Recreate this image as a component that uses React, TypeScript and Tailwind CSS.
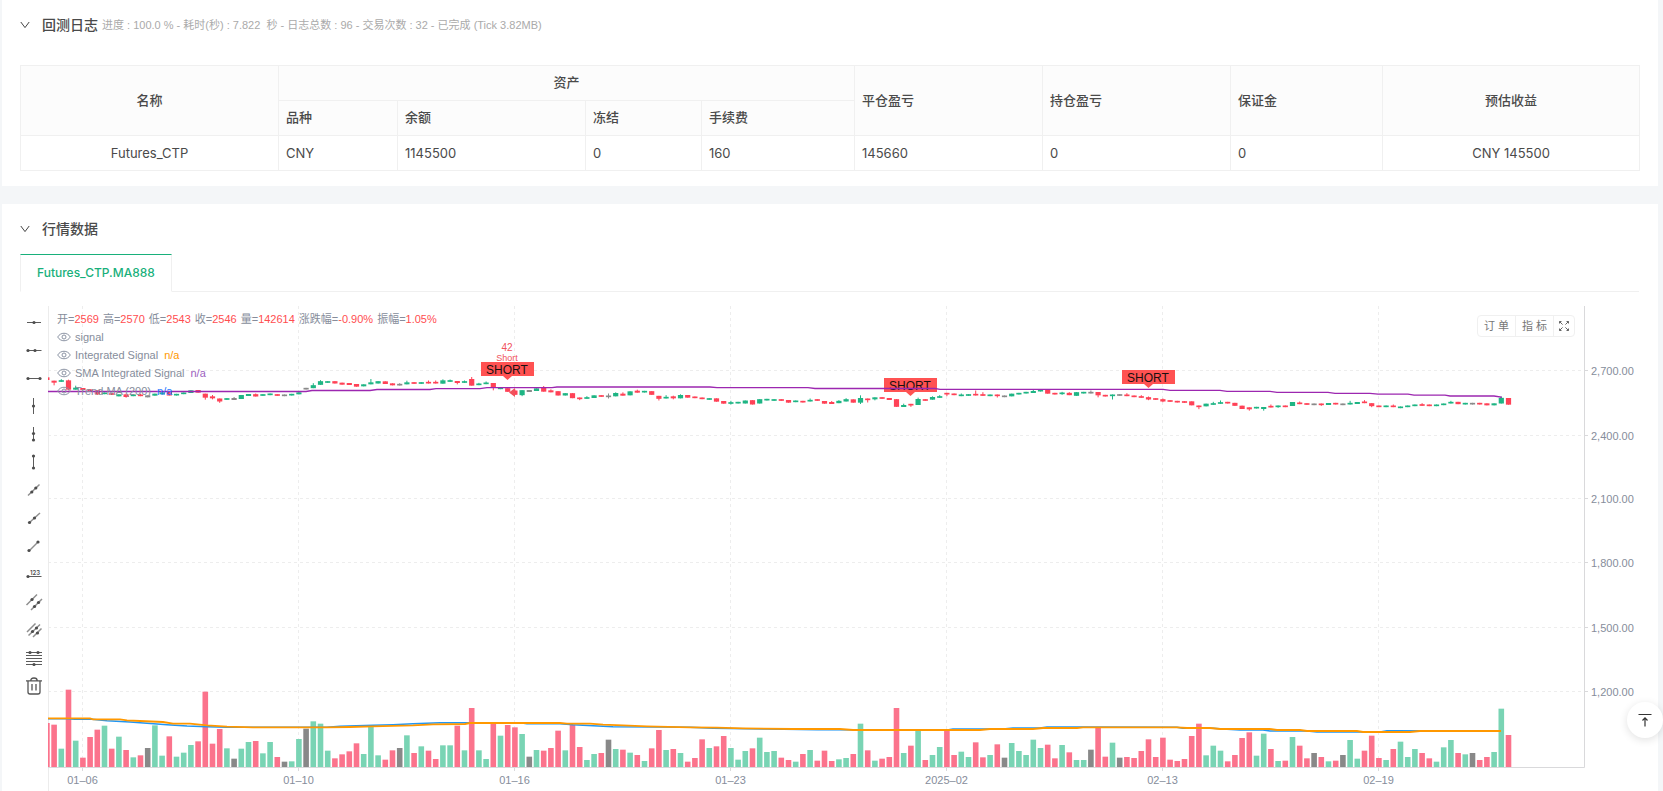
type Kind = "up" | "down" | "flat"

// "r" falls, "g" rises, "k" is unchanged
const kinds: Record<string, Kind> = { r: "down", g: "up", k: "flat" }

// kind, volume, body middle, body height, wick above, wick below (thirds of a pixel)
type Bar = [string, number, number, number, number?, number?]

const bars: Bar[] = [
  ["r", 132, 146, 8], ["r", 127, 155, 6, 0, 8], ["g", 55, 153, 5, 3], ["r", 232, 165, 28, 2, 2], ["g", 79, 176, 6, 6],
  ["r", 28, 177, 6], ["r", 90, 181, 6], ["r", 112, 187, 12, 0, 2], ["g", 124, 190, 5], ["r", 55, 192, 5],
  ["g", 91, 196, 6], ["r", 51, 197, 8, 2, 2], ["g", 29, 196, 5], ["r", 35, 196, 5, 2], ["k", 57, 199, 6],
  ["g", 125, 194, 6], ["g", 34, 190, 6], ["r", 92, 191, 11], ["g", 31, 194, 5], ["g", 43, 190, 5],
  ["g", 66, 185, 8], ["r", 77, 184, 8], ["r", 226, 197, 12, 0, 6], ["r", 70, 202, 6, 4, 3], ["r", 114, 210, 9, 0, 4],
  ["g", 56, 207, 5], ["k", 25, 207, 6, 3], ["g", 55, 201, 12], ["g", 75, 195, 6], ["r", 78, 196, 7, 2],
  ["g", 41, 195, 5], ["g", 75, 193, 5], ["r", 30, 195, 5], ["k", 16, 196, 5], ["g", 17, 194, 5],
  ["g", 84, 190, 6, 4], ["k", 115, 176, 5], ["g", 137, 170, 9, 6], ["g", 130, 159, 11, 3], ["g", 49, 156, 5],
  ["r", 26, 157, 7], ["r", 38, 161, 6], ["r", 47, 162, 6], ["r", 71, 166, 8], ["g", 39, 166, 6],
  ["g", 124, 160, 6, 10], ["g", 35, 157, 7], ["r", 22, 158, 8], ["r", 50, 163, 6], ["k", 57, 164, 5, 2],
  ["g", 95, 160, 6, 5], ["r", 42, 159, 5], ["g", 62, 159, 5], ["r", 49, 158, 5, 4], ["r", 24, 158, 5, 4],
  ["g", 65, 156, 10, 3], ["g", 65, 153, 5, 2], ["r", 124, 156, 6, 0, 4], ["g", 50, 156, 5, 2], ["r", 177, 157, 20, 6],
  ["g", 50, 163, 5, 2], ["g", 24, 160, 5, 3], ["r", 132, 166, 14, 0, 8], ["g", 94, 175, 5], ["r", 126, 180, 11],
  ["r", 119, 188, 13, 3], ["g", 99, 188, 15, 0, 3], ["k", 31, 183, 6], ["g", 51, 179, 8], ["r", 49, 178, 14, 3],
  ["r", 57, 184, 6, 3], ["r", 109, 190, 13], ["g", 50, 193, 7], ["r", 127, 197, 15], ["r", 60, 205, 5, 0, 3],
  ["g", 21, 204, 5, 3], ["g", 39, 200, 8], ["r", 42, 198, 5], ["k", 82, 199, 5, 6, 4], ["g", 54, 194, 10, 2],
  ["r", 52, 194, 6, 4], ["g", 43, 190, 12], ["r", 36, 185, 6, 3], ["g", 18, 185, 5], ["r", 56, 189, 11],
  ["r", 111, 202, 9, 0, 5], ["g", 51, 203, 5, 5], ["r", 54, 202, 6, 2, 3], ["g", 42, 200, 10, 2], ["r", 16, 199, 8],
  ["r", 27, 202, 5], ["r", 83, 205, 5], ["g", 57, 207, 5], ["r", 62, 210, 10], ["r", 93, 217, 8],
  ["g", 57, 219, 5, 4, 2], ["g", 22, 218, 5], ["g", 48, 216, 9], ["r", 56, 217, 13], ["g", 88, 214, 13],
  ["g", 45, 209, 5], ["g", 48, 210, 5], ["r", 28, 210, 5], ["r", 21, 214, 8], ["g", 16, 214, 5],
  ["r", 39, 215, 5], ["g", 51, 212, 5, 4], ["r", 19, 210, 5], ["r", 49, 217, 8], ["r", 18, 219, 6, 3],
  ["g", 23, 216, 7, 2], ["g", 27, 211, 7, 3], ["r", 39, 213, 10], ["g", 130, 211, 14, 8, 4], ["r", 50, 208, 5, 0, 7],
  ["g", 19, 205, 6, 0, 3], ["r", 25, 204, 5], ["r", 30, 207, 6], ["r", 177, 219, 23], ["g", 42, 228, 6, 4],
  ["r", 64, 224, 5, 0, 4], ["g", 114, 216, 18, 4], ["r", 21, 210, 5], ["g", 36, 205, 8, 2], ["g", 60, 201, 5, 3],
  ["r", 112, 191, 5, 0, 5], ["r", 36, 193, 5], ["g", 46, 196, 5, 3], ["g", 30, 195, 5], ["r", 74, 194, 5, 10],
  ["r", 29, 195, 5, 6], ["g", 36, 196, 5], ["r", 68, 196, 5, 0, 4], ["k", 28, 199, 5], ["g", 72, 195, 8],
  ["g", 48, 191, 5], ["g", 36, 188, 5], ["g", 82, 186, 6, 3], ["g", 57, 182, 5], ["r", 67, 185, 12],
  ["r", 26, 191, 5], ["g", 66, 190, 5, 2, 2], ["r", 44, 192, 7, 2], ["g", 21, 192, 11], ["g", 21, 188, 5],
  ["k", 52, 188, 5, 4], ["r", 117, 191, 10, 0, 6], ["r", 31, 197, 5], ["g", 73, 196, 5, 0, 10], ["k", 28, 195, 5],
  ["r", 30, 196, 5, 4], ["r", 27, 199, 5], ["r", 48, 201, 5, 3], ["r", 83, 205, 7, 2, 2], ["r", 30, 207, 5],
  ["r", 88, 211, 7, 2, 2], ["r", 22, 213, 5], ["r", 18, 215, 5], ["r", 24, 216, 5], ["r", 93, 220, 12],
  ["r", 130, 229, 5, 0, 6], ["g", 35, 225, 8], ["g", 64, 222, 5, 4], ["g", 49, 219, 5, 5], ["r", 17, 218, 5],
  ["r", 36, 223, 9], ["r", 87, 232, 10], ["r", 104, 235, 6, 0, 4], ["g", 34, 233, 5], ["g", 100, 234, 6, 0, 5],
  ["r", 54, 230, 5, 4], ["g", 18, 229, 5, 0, 2], ["r", 19, 229, 5], ["g", 90, 222, 12], ["r", 64, 220, 5, 3],
  ["r", 26, 222, 5], ["k", 42, 223, 5], ["r", 30, 223, 5, 0, 2], ["g", 17, 222, 6], ["r", 19, 221, 5],
  ["k", 36, 223, 5], ["g", 81, 221, 5, 6], ["g", 25, 219, 6], ["r", 49, 217, 5, 4], ["r", 94, 224, 9, 0, 3],
  ["r", 27, 229, 5], ["g", 21, 229, 5], ["r", 54, 229, 5, 3], ["g", 76, 232, 5], ["g", 30, 229, 5],
  ["g", 54, 226, 5], ["r", 42, 225, 5, 3], ["r", 26, 226, 5], ["g", 16, 226, 5], ["g", 59, 223, 5],
  ["g", 81, 218, 5, 3], ["r", 42, 219, 7], ["g", 38, 221, 5], ["k", 42, 221, 5], ["r", 21, 221, 5],
  ["r", 30, 223, 6], ["g", 45, 223, 6], ["g", 175, 212, 17, 4], ["r", 96, 214, 20],
]

const candleColor = { up: "#1fb584", down: "#ff4257", flat: "#8a8a8a" }
const volumeColor = { up: "#79d4b4", down: "#fb738c", flat: "#888888" }

const barX = (i: number) => 46.9 + i * 7.2

const priceTicks = [
  { label: "2,700.00", y: 371 },
  { label: "2,400.00", y: 436 },
  { label: "2,100.00", y: 499 },
  { label: "1,800.00", y: 563 },
  { label: "1,500.00", y: 628 },
  { label: "1,200.00", y: 692 },
]

const dateTicks = ["01–06", "01–10", "01–16", "01–23", "2025–02", "02–13", "02–19"]

const trendLine =
  "48,391.5 306,391.5 312,390.5 370,390.5 377,389.5 430,389.5 436,388.7 480,388.7 487,387.7 552,387.7 557,387 710,387 717,387.7 808,387.7 815,388.5 935,388.5 940,389.3 1163,389.3 1170,390.3 1220,390.3 1227,391.3 1270,391.3 1277,392.3 1328,392.3 1335,393.3 1370,393.3 1378,394.2 1408,394.2 1414,395.2 1445,395.2 1450,396 1494,396 1501,397 1501,398"
const volumeFast =
  "48,718.7 67,718.7 75,719.3 92,719.3 107,720.7 130,722 147,723.3 167,724.7 187,726 207,726.7 227,727.3 327,727.3 340,726.3 373,725.3 393,724.7 413,723.7 440,722.7 520,722.7 527,723.7 560,723.7 573,724.7 593,725.7 613,726.7 657,727 690,727.3 713,728.3 767,729 817,729.7 947,730 953,729 1003,729 1013,728 1040,728 1047,727 1080,727 1177,727.3 1183,728.3 1213,728.3 1227,729.3 1240,730 1263,730 1270,731 1307,731 1317,732 1380,732 1387,730.8 1501,731"
const volumeSlow =
  "48,718.3 90,718.3 93,719.3 120,719.3 127,720.3 140,721 163,722 173,723.7 190,723.7 207,725.3 227,726.7 253,727.3 327,727.3 350,727 373,726.3 413,725.3 433,724.3 465,724 470,723 560,723 567,723.7 590,723.7 603,724.7 623,725.3 647,726.3 690,727.3 717,727.7 743,728.3 793,729 840,729 853,730 980,730 990,729 1033,729 1043,728 1077,728 1083,727.3 1177,727.3 1187,728 1210,728 1220,729 1270,729 1277,730 1300,730 1307,731 1357,731 1363,732 1410,732 1420,731 1501,731"

const shortSignals = [
  { x: 507, y: 362 },
  { x: 910, y: 378 },
  { x: 1148, y: 370 },
]

const legend = [
  { name: "signal", value: "", color: "" },
  { name: "Integrated Signal", value: "n/a", color: "text-[#ff9800]" },
  { name: "SMA Integrated Signal", value: "n/a", color: "text-[#9c5fc0]" },
  { name: "Trend MA (200)", value: "n/a", color: "text-[#2979ff]" },
]

const quote = [
  ["开", "2569"],
  ["高", "2570"],
  ["低", "2543"],
  ["收", "2546"],
  ["量", "142614"],
  ["涨跌幅", "-0.90%"],
  ["振幅", "1.05%"],
]

// each tool: line segments and handle dots on a 16px grid
const tools: { name: string; d: string; dots: number[][]; soft?: boolean }[] = [
  { name: "horizontal straight line", d: "M1 8.500H15", dots: [[8, 8.5]] },
  { name: "horizontal ray", d: "M2 8.500H15.500", dots: [[2, 8.5], [9, 8.5]] },
  { name: "horizontal segment", d: "M2 8.500H14", dots: [[2, 8.5], [14, 8.5]] },
  { name: "vertical straight line", d: "M7.500 0V16", dots: [[7.5, 8]] },
  { name: "vertical ray", d: "M7.500 1V14.500", dots: [[7.5, 7.5], [7.5, 14]] },
  { name: "vertical segment", d: "M7.500 2V14", dots: [[7.5, 2], [7.5, 14]] },
  { name: "straight line", d: "M2 13.500L13.500 2.500", dots: [[5.8, 10], [9.8, 6]], soft: true },
  { name: "ray", d: "M3.500 12.500L14 3", dots: [[3.5, 12.5], [8.5, 8]], soft: true },
  { name: "segment", d: "M3 13L12 4", dots: [[3, 12.5], [12, 4]], soft: true },
  { name: "price line", d: "M2 10.500H15.500", dots: [[2, 10.5]] },
  { name: "parallel lines", d: "M.500 11L11 .500M5 16L16 5", dots: [[6, 5.5], [8.5, 12.5], [12.5, 8.5]], soft: true },
  { name: "price channel", d: "M1 10L9.500 1.500M2.500 13.500L14 2.500M7 15L15.500 6.500", dots: [[6.5, 9.5], [10.5, 6], [11.5, 11]], soft: true },
  { name: "fibonacci line", d: "M0 2.500H16M0 5.500H16M0 8.500H16M0 11.500H16M0 14.500H16", dots: [[4, 2.5], [12, 2.5], [8, 14.5]] },
]

function Chevron() {
  return (
    <svg className="h-2.5 w-2.5 shrink-0" viewBox="0 0 10 10" fill="none" stroke="#444" strokeWidth="1">
      <path d="M.8 2L5 7.600L9.200 2" />
    </svg>
  )
}

function Eye() {
  return (
    <svg className="h-3 w-3.5 shrink-0" viewBox="0 0 14 12" fill="none" stroke="#8b93a3" strokeWidth="1">
      <path d="M.7 6C3.500 1 10.500 1 13.300 6C10.500 11 3.500 11 .7 6Z" />
      <circle cx="7" cy="6" r="2" />
    </svg>
  )
}

function DrawingTools() {
  return (
    <div className="flex w-7 shrink-0 flex-col items-center gap-1 pt-1">
      {tools.map((tool) => (
        <button key={tool.name} type="button" aria-label={tool.name} className="flex h-6 w-6 items-center justify-center">
          <svg className="h-4 w-4 overflow-visible" viewBox="0 0 16 16">
            <path d={tool.d} fill="none" stroke={tool.soft ? "#8f8f8f" : "#5c5c5c"} strokeWidth={tool.soft ? 1.5 : 1} />
            {tool.dots.map(([cx, cy], i) => (
              <circle key={i} cx={cx} cy={cy} r="1.6" fill="#4d4d4d" />
            ))}
            {tool.name === "price line" && (
              <text x="4" y="9" fontSize="6" fontWeight="600" fill="#4d4d4d">123</text>
            )}
          </svg>
        </button>
      ))}
      <button type="button" aria-label="remove drawings" className="flex h-6 w-6 items-center justify-center">
        <svg className="h-4 w-4 overflow-visible" viewBox="0 0 16 16" fill="none" stroke="#555" strokeWidth="1.3">
          <path d="M0 2.800H16M4.800 2.800C4.800 .8 5.500 0 8 0C10.500 0 11.200 .8 11.200 2.800M2 2.800V14C2 15.500 2.500 16 4 16H12C13.500 16 14 15.500 14 14V2.800M6 6V12.500M10 6V12.500" />
        </svg>
      </button>
    </div>
  )
}

function PriceChart() {
  return (
    <svg
      className="block w-full"
      viewBox="48 306 1591 485"
      role="img"
      aria-label="Futures_CTP.MA888"
      fontFamily="'Liberation Sans', sans-serif"
    >
      {/* Grid and axes */}
      <g stroke="#ededed" strokeDasharray="3 3">
        {priceTicks.map((tick) => (
          <path key={tick.label} d={`M48 ${tick.y - 0.5}H1584`} />
        ))}
        {dateTicks.map((label, i) => (
          <path key={label} d={`M${82.5 + i * 216} 306V767`} />
        ))}
      </g>
      <path d="M48.500 306V791" stroke="#ececec" />
      <path d="M48 767.500H1584.500V306" stroke="#d9d9db" fill="none" />
      <g fontSize="11" fill="#868d9b">
        {priceTicks.map((tick) => (
          <g key={tick.label}>
            <path d={`M1585 ${tick.y - 0.5}H1588`} stroke="#d9d9db" />
            <text x="1591" y={tick.y + 4}>{tick.label}</text>
          </g>
        ))}
        {dateTicks.map((label, i) => (
          <g key={label}>
            <path d={`M${82.5 + i * 216} 768V771`} stroke="#d9d9db" />
            <text x={82.5 + i * 216} y="784" textAnchor="middle">{label}</text>
          </g>
        ))}
      </g>

      {/* Volume */}
      {bars.map(([kind, volume], i) => (
        <rect
          key={i}
          x={barX(i) - 2.8}
          y={767 - volume / 3}
          width="5.6"
          height={volume / 3}
          fill={volumeColor[kinds[kind]]}
        />
      ))}
      <polyline points={volumeFast} fill="none" stroke="#2196f3" strokeWidth="1.600" />
      <polyline points={volumeSlow} fill="none" stroke="#ff9800" strokeWidth="1.800" />

      {/* Candles */}
      {bars.map(([kind, , middle, height, above = 0, below = 0], i) => {
        const color = candleColor[kinds[kind]]
        const top = 330 + (middle - height / 2) / 3
        return (
          <g key={i} fill={color} stroke="none">
            <rect x={barX(i) - 2.6} y={top} width="5.2" height={height / 3} />
            <rect x={barX(i) - 0.5} y={top - above / 3} width="1" height={(above + height + below) / 3} />
          </g>
        )
      })}

      {/* Signals */}
      <g textAnchor="middle" fill="#f0525b">
        <text x="507" y="351" fontSize="10">42</text>
        <text x="507" y="361" fontSize="9">Short</text>
        <path d="M509 392.500L515 388V397Z" />
      </g>
      {shortSignals.map(({ x, y }) => (
        <g key={x}>
          <path d={`M${x - 26} ${y}h53v14h-22l-4.500 4l-4.500 -4h-22z`} fill="#ff5252" />
          <text x={x} y={y + 12} fontSize="12" textAnchor="middle" fill="#1a1010">SHORT</text>
        </g>
      ))}
      <polyline points={trendLine} fill="none" stroke="#9c27b0" strokeWidth="1.300" />
    </svg>
  )
}

function ChartLegend() {
  return (
    <div className="absolute left-[9px] top-1 font-['Liberation_Sans','Noto_Sans_CJK_SC',sans-serif] text-[11px] leading-[18px] text-[#868d9b]">
      <div className="flex gap-1 whitespace-nowrap">
        {quote.map(([name, value]) => (
          <span key={name}>
            {name}=<span className="text-[#ff4d4f]">{value}</span>
          </span>
        ))}
      </div>
      {legend.map((item) => (
        <div key={item.name} className="flex items-center">
          <Eye />
          <span className="ml-1 mr-1.5">{item.name}</span>
          <span className={item.color}>{item.value}</span>
        </div>
      ))}
    </div>
  )
}

function ChartButtons() {
  return (
    <div className="absolute right-16 top-[9px] flex h-[22px] rounded border border-[#f0f0f0] bg-white text-[11px] text-[#777]">
      <button type="button" className="w-[38px] border-r border-[#f0f0f0]">订 单</button>
      <button type="button" className="w-[38px] border-r border-[#f0f0f0]">指 标</button>
      <button type="button" aria-label="全屏" className="flex w-5 items-center justify-center">
        <svg className="h-2.5 w-2.5" viewBox="0 0 10 10" fill="none" stroke="#666" strokeWidth="1">
          <path d="M.5 2.500V.5H2.500M.5 .5L3.600 3.600M7.500 .5H9.500V2.500M9.500 .5L6.400 3.600M.5 7.500V9.500H2.500M.5 9.500L3.600 6.400M7.500 9.500H9.500V7.500M9.500 9.500L6.400 6.400" />
        </svg>
      </button>
    </div>
  )
}

export default function App() {
  const head = "border border-[#f0f0f0] bg-[#fcfcfc] px-[7px] pb-0.5 font-medium"
  const cell = "border border-[#f0f0f0] px-[7px]"

  return (
    <main className="min-h-screen bg-[#f4f6f8] pl-0.5 pr-[5px] font-['Inter','Noto_Sans_CJK_SC',sans-serif] text-[#4a4a4a]">
      {/* Backtest log */}
      <section className="bg-white pb-[15px] pl-[18px] pr-[19px]">
        <header className="flex h-[65px] items-start pt-[13px]">
          <div className="flex h-6 items-center gap-3">
            <Chevron />
            <div className="flex items-center gap-1">
              <h2 className="text-sm font-medium">回测日志</h2>
              <span className="whitespace-pre font-['Liberation_Sans','Noto_Sans_CJK_SC',sans-serif] text-[11px] text-[#aaa]">
                进度 : 100.0 % - 耗时(秒) : 7.822  秒 - 日志总数 : 96 - 交易次数 : 32 - 已完成 (Tick 3.82MB)
              </span>
            </div>
          </div>
        </header>
        <table className="w-full table-fixed border-collapse text-left text-[13px] leading-5">
          <colgroup>
            <col className="w-[258px]" />
            <col className="w-[119px]" />
            <col className="w-[188px]" />
            <col className="w-[116px]" />
            <col className="w-[153px]" />
            <col className="w-[188px]" />
            <col className="w-[188px]" />
            <col className="w-[152px]" />
            <col className="w-[257px]" />
          </colgroup>
          <thead>
            <tr className="h-[35px]">
              <th rowSpan={2} className={`${head} text-center`}>名称</th>
              <th colSpan={4} className={`${head} text-center`}>资产</th>
              <th rowSpan={2} className={head}>平仓盈亏</th>
              <th rowSpan={2} className={head}>持仓盈亏</th>
              <th rowSpan={2} className={head}>保证金</th>
              <th rowSpan={2} className={`${head} text-center`}>预估收益</th>
            </tr>
            <tr className="h-[35px]">
              <th className={head}>品种</th>
              <th className={head}>余额</th>
              <th className={head}>冻结</th>
              <th className={head}>手续费</th>
            </tr>
          </thead>
          <tbody>
            <tr className="h-[35px]">
              <td className={`${cell} text-center`}>Futures_CTP</td>
              <td className={cell}>CNY</td>
              <td className={cell}>1145500</td>
              <td className={cell}>0</td>
              <td className={cell}>160</td>
              <td className={cell}>145660</td>
              <td className={cell}>0</td>
              <td className={cell}>0</td>
              <td className={`${cell} text-center`}>CNY 145500</td>
            </tr>
          </tbody>
        </table>
      </section>

      {/* Market data */}
      <section className="mt-[18px] bg-white pl-[18px] pr-[19px]">
        <header className="flex h-[50px] items-center gap-3">
          <Chevron />
          <h2 className="text-sm font-medium">行情数据</h2>
        </header>
        <div className="flex border-b border-[#f0f0f0]">
          <button
            type="button"
            className="-mb-px h-[38px] border border-[#f0f0f0] border-b-white border-t-[#18b07b] bg-white px-4 text-xs font-medium text-[#18b07b]"
          >
            Futures_CTP.MA888
          </button>
        </div>
        <div className="flex pt-3.5">
          <DrawingTools />
          <div className="relative min-w-0 flex-1">
            <PriceChart />
            <ChartLegend />
            <ChartButtons />
          </div>
        </div>
      </section>

      <button
        type="button"
        aria-label="回到顶部"
        className="fixed bottom-[53px] right-0 flex h-9 w-9 items-center justify-center rounded-full bg-white shadow-[0_2px_8px_rgba(0,0,0,0.12)]"
      >
        <svg className="h-4 w-4" viewBox="0 0 16 16" fill="none" stroke="#333" strokeWidth="1.200">
          <path d="M1.500 2.500H14.500M8 14.500V6M5.500 8.500L8 5.800L10.500 8.500" />
        </svg>
      </button>
    </main>
  )
}
